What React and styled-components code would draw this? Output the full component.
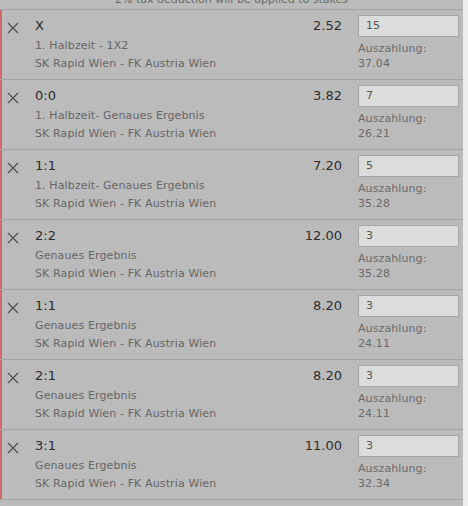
import React from 'react';
import styled, { createGlobalStyle } from 'styled-components';

const GlobalStyle = createGlobalStyle`
  html, body {
    margin: 0;
    padding: 0;
    background: #efefef;
  }
  body {
    font-family: "DejaVu Sans", Verdana, sans-serif;
  }
`

const Slip = styled.div`
  width: 463px;
  height: 506px;
  background: #bbbbbb;
  overflow: hidden;
`
const Notice = styled.div`
  height: 9px;
  overflow: hidden;
  text-align: center;
  font-size: 11px;
  line-height: 12px;
  color: #6a6a6a;
  span {
    display: block;
    margin-top: -6px;
  }
`
const Row = styled.div`
  border-top: 1px solid #a4a4a4;
  height: 69px;
`
const RowLast = styled.div`
  border-top: 1px solid #a4a4a4;
`
const Inner = styled.div`
  display: flex;
  height: 100%;
  box-sizing: border-box;
  border-left: 2px solid #d2676a;
  padding-top: 5px;
`
const Remove = styled.div`
  width: 33px;
  padding-top: 7px;
  padding-left: 5px;
  box-sizing: border-box;
  svg {
    display: block;
  }
`
const Info = styled.div`
  flex: 1;
`
const Pick = styled.div`
  font-size: 13px;
  line-height: 22px;
  color: #2a2a2a;
`
const Sub = styled.div`
  font-size: 11px;
  line-height: 18px;
  letter-spacing: 0.12px;
  color: #666;
  white-space: nowrap;
`
const Odds = styled.div`
  font-size: 13px;
  line-height: 22px;
  color: #2e2e2e;
  margin-right: 16px;
`
const Stake = styled.div`
  width: 101px;
  margin-right: 4px;
`
const StakeInput = styled.div`
  box-sizing: border-box;
  height: 22px;
  border: 1px solid #a6a6a6;
  background: #dcdcdc;
  font-size: 11px;
  line-height: 20px;
  padding-left: 7px;
  color: #555;
`
const Payout = styled.div`
  margin-top: 4px;
  font-size: 11px;
  line-height: 15px;
  letter-spacing: 0.1px;
  color: #6a6a6a;
`

const bets = [
  { pick: 'X', market: '1. Halbzeit - 1X2', odds: '2.52', stake: '15', payout: '37.04' },
  { pick: '0:0', market: '1. Halbzeit- Genaues Ergebnis', odds: '3.82', stake: '7', payout: '26.21' },
  { pick: '1:1', market: '1. Halbzeit- Genaues Ergebnis', odds: '7.20', stake: '5', payout: '35.28' },
  { pick: '2:2', market: 'Genaues Ergebnis', odds: '12.00', stake: '3', payout: '35.28' },
  { pick: '1:1', market: 'Genaues Ergebnis', odds: '8.20', stake: '3', payout: '24.11' },
  { pick: '2:1', market: 'Genaues Ergebnis', odds: '8.20', stake: '3', payout: '24.11' },
  { pick: '3:1', market: 'Genaues Ergebnis', odds: '11.00', stake: '3', payout: '32.34' },
];

const CloseIcon = () => (
  <svg width="12" height="12" viewBox="0 0 12 12">
    <path d="M1 1 L11 11 M11 1 L1 11" stroke="#4a4a4a" strokeWidth="1.1" fill="none" />
  </svg>
);

export default function App() {
  return (
    <Slip>
      <GlobalStyle />
      <Notice><span>2% tax deduction will be applied to stakes</span></Notice>
      {bets.map((b, i) => (
        <Row key={i}>
          <Inner>
            <Remove><CloseIcon /></Remove>
            <Info>
              <Pick>{b.pick}</Pick>
              <Sub>{b.market}</Sub>
              <Sub>SK Rapid Wien - FK Austria Wien</Sub>
            </Info>
            <Odds>{b.odds}</Odds>
            <Stake>
              <StakeInput>{b.stake}</StakeInput>
              <Payout>Auszahlung:<br />{b.payout}</Payout>
            </Stake>
          </Inner>
        </Row>
      ))}
      <RowLast />
    </Slip>
  );
}
